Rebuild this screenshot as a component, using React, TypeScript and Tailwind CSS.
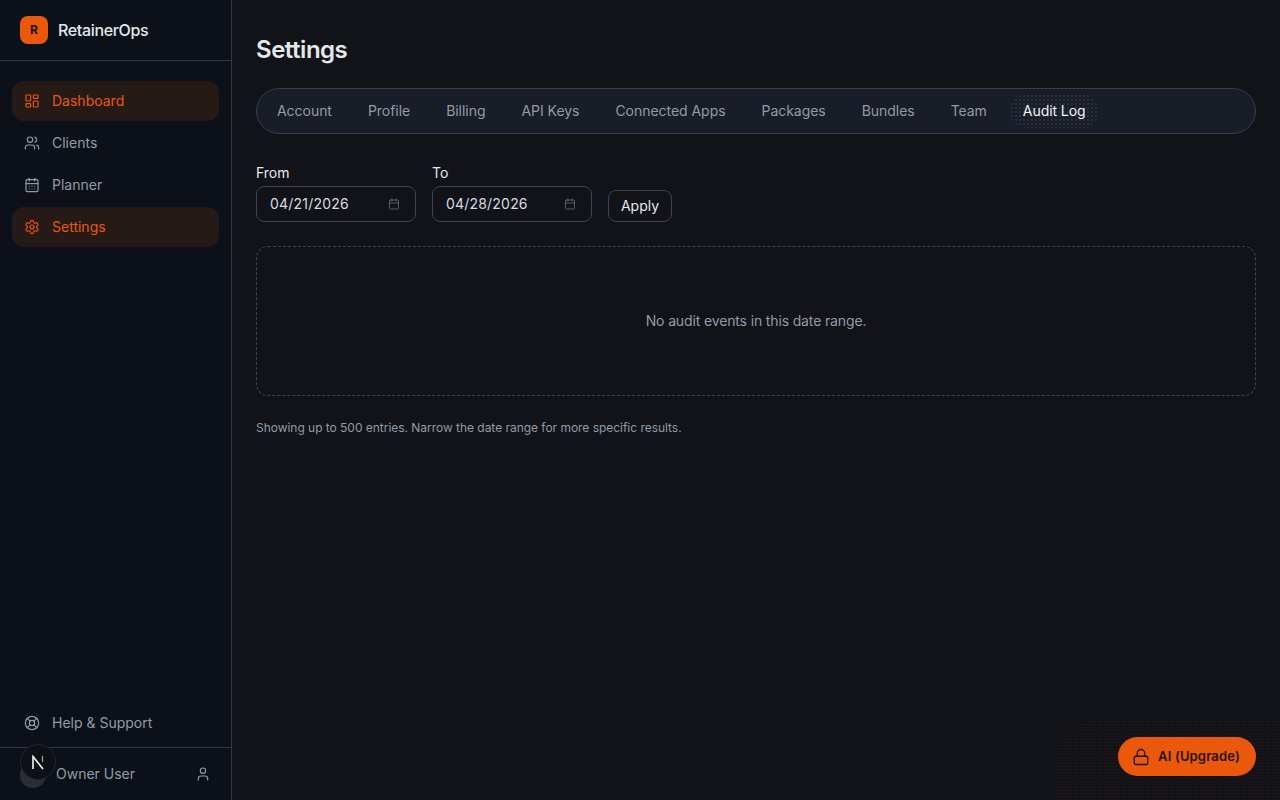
import { Calendar, CalendarDays, LayoutDashboard, LifeBuoy, Lock, Settings, User, Users } from "lucide-react";

const NAV = [
  { label: "Dashboard", icon: LayoutDashboard, active: true },
  { label: "Clients", icon: Users, active: false },
  { label: "Planner", icon: CalendarDays, active: false },
  { label: "Settings", icon: Settings, active: true },
];

const TABS = ["Account", "Profile", "Billing", "API Keys", "Connected Apps", "Packages", "Bundles", "Team", "Audit Log"];

function DateField({ label, value }: { label: string; value: string }) {
  return (
    <div className="flex flex-col">
      <label className="mb-[3px] text-sm leading-[20px] tracking-[-0.05px] text-[#e5e7eb]">{label}</label>
      <div className="flex h-9 w-40 items-center justify-between rounded-lg border border-[#3f4550] pl-[13px] pr-[15px] text-sm tracking-[0.2px] text-[#d8dbe0]">
        <span>{value}</span>
        <Calendar size={12} strokeWidth={1.5} className="text-[#6b7280]" />
      </div>
    </div>
  );
}

export default function App() {
  return (
    <div className="relative flex h-[800px] w-[1280px] overflow-hidden bg-[#111318] font-['Inter',sans-serif]">
      <aside className="flex w-[232px] shrink-0 flex-col border-r border-[#33373f] bg-[#0c1119]">
        <div className="flex h-[61px] items-center gap-[10px] border-b border-[#33373f] px-5">
          <div className="flex h-7 w-7 items-center justify-center rounded-lg bg-[#ea580c] text-xs font-bold text-[#1c1008]">R</div>
          <span className="text-base font-medium tracking-[-0.35px] text-[#e5e7eb]">RetainerOps</span>
        </div>
        <nav className="flex flex-col gap-[2px] px-3 pt-5">
          {NAV.map((item) => (
            <div
              key={item.label}
              className={`flex h-10 items-center gap-3 rounded-xl px-3 text-sm ${
                item.active ? "bg-[#261a16] text-[#ea580c]" : "text-[#949aa6]"
              }`}
            >
              <item.icon size={16} strokeWidth={1.75} />
              <span>{item.label}</span>
            </div>
          ))}
        </nav>
        <div className="mt-auto">
          <div className="flex h-10 items-center gap-3 px-6 pb-[9px] text-sm text-[#949aa6]">
            <LifeBuoy size={16} strokeWidth={1.75} />
            <span>Help &amp; Support</span>
          </div>
          <div className="relative flex h-[53px] items-center justify-between border-t border-[#33373f] pl-[56px] pr-5 text-sm text-[#949aa6]">
            <span>Owner User</span>
            <User size={16} strokeWidth={1.75} />
            <div className="absolute left-5 top-[14px] h-[26px] w-[26px] rounded-full bg-[radial-gradient(circle,#2c3038_0.7px,transparent_0.8px)] bg-[length:2px_2px]" />
            <div className="absolute left-5 top-[-4px] flex h-9 w-9 items-center justify-center rounded-full border border-[#24262c] bg-[#0e1015]">
              <svg width="14" height="15" viewBox="0 0 14 15" fill="none" stroke="#f3f4f6">
                <path d="M2 14V1.5L12 14" strokeWidth="1.6" />
                <path d="M11.5 1v6" strokeWidth="1.2" stroke="#a1a5ad" />
              </svg>
            </div>
          </div>
        </div>
      </aside>

      <main className="flex-1 px-6 pt-[31px]">
        <h1 className="mb-[19px] text-2xl font-semibold leading-[38px] tracking-[-0.48px] text-[#e5e7eb]">Settings</h1>
        <div className="mb-[29px] flex h-[46px] w-[1000px] items-center gap-[36px] rounded-[23px] border border-[#3a3f49] bg-[#191d27] pl-5 text-sm tracking-[-0.04px] text-[#949aa6]">
          {TABS.map((tab) =>
            tab === "Audit Log" ? (
              <span key={tab} className="relative tracking-[-0.08px] text-[#f3f4f6]">
                <span className="absolute -inset-x-[13px] -inset-y-[7px] rounded-full bg-[radial-gradient(circle,#2c3240_0.7px,transparent_0.8px)] bg-[length:4px_4px]" />
                <span className="relative">{tab}</span>
              </span>
            ) : (
              <span key={tab}>{tab}</span>
            ),
          )}
        </div>
        <div className="flex items-end gap-4">
          <DateField label="From" value="04/21/2026" />
          <DateField label="To" value="04/28/2026" />
          <button className="h-8 w-16 rounded-lg border border-[#3f4550] text-sm text-[#e5e7eb]">Apply</button>
        </div>
        <div className="mt-6 flex h-[150px] w-[1000px] items-center justify-center rounded-xl border border-dashed border-[#3f4550] text-sm tracking-[-0.14px] text-[#949aa6]">
          No audit events in this date range.
        </div>
        <p className="mt-6 text-xs tracking-[-0.03px] text-[#949aa6]">Showing up to 500 entries. Narrow the date range for more specific results.</p>
      </main>

      <div className="absolute bottom-0 right-0 h-[80px] w-[225px] rounded-tl-[40px] bg-[radial-gradient(circle,#33190e_0.8px,transparent_0.9px)] bg-[length:3px_3px]" />
      <button className="absolute bottom-[24px] right-[24px] flex h-[39px] w-[138px] items-center justify-center gap-2 rounded-full bg-[#ea580c] pr-[2px] text-[13px] font-semibold tracking-[0.15px] text-[#1f130b]">
        <Lock size={18} strokeWidth={1.75} />
        <span>AI (Upgrade)</span>
      </button>
    </div>
  );
}
